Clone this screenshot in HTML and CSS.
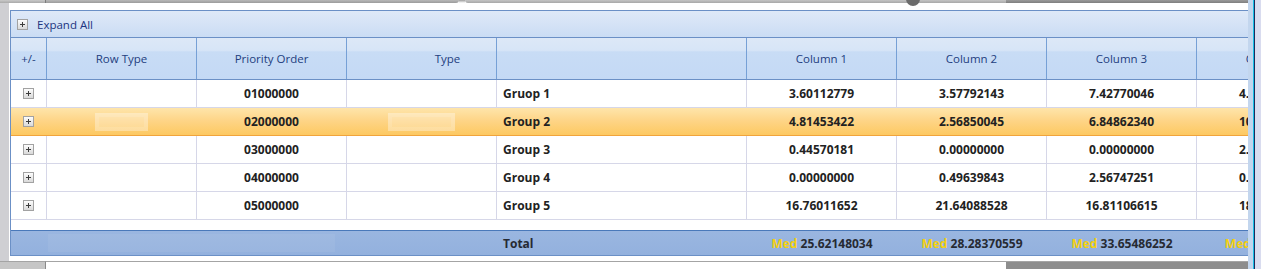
FILE: index.html
```html
<!DOCTYPE html>
<html lang="en">
<head>
    <meta charset="UTF-8">
    <title>Group Totals</title>
    <link rel="stylesheet" href="styles.css">
</head>
<body>

    <div class="screen">
        <div class="workspace">
            <!-- Tab strip of the host window -->
            <div class="tabstrip">
                <span class="tab tab-a"></span>
                <span class="tab tab-b"></span>
                <span class="notch"></span>
                <span class="tab tab-c"><span class="close-btn"></span></span>
                <span class="tab tab-d"></span>
            </div>

            <div class="middle">
                <div class="side"></div>
                <div class="panel">
                    <div class="grid">
                        <div class="toolbar">
                            <span class="plus"></span>
                            <span>Expand All</span>
                        </div>

                        <div class="row head">
                            <div class="cell">+/-</div>
                            <div class="cell">Row Type</div>
                            <div class="cell">Priority Order</div>
                            <div class="cell type-head">Type</div>
                            <div class="cell"></div>
                            <div class="cell">Column 1</div>
                            <div class="cell">Column 2</div>
                            <div class="cell">Column 3</div>
                            <div class="cell">Column 4</div>
                        </div>

                        <div class="row data">
                            <div class="cell"><span class="plus"></span></div>
                            <div class="cell"></div>
                            <div class="cell">01000000</div>
                            <div class="cell"></div>
                            <div class="cell group">Gruop 1</div>
                            <div class="cell">3.60112779</div>
                            <div class="cell">3.57792143</div>
                            <div class="cell">7.42770046</div>
                            <div class="cell">4.35218870</div>
                        </div>

                        <div class="row data selected">
                            <div class="cell"><span class="plus"></span></div>
                            <div class="cell"><span class="smear"></span></div>
                            <div class="cell">02000000</div>
                            <div class="cell"><span class="smear wide"></span></div>
                            <div class="cell group">Group 2</div>
                            <div class="cell">4.81453422</div>
                            <div class="cell">2.56850045</div>
                            <div class="cell">6.84862340</div>
                            <div class="cell">10.2648177</div>
                        </div>

                        <div class="row data">
                            <div class="cell"><span class="plus"></span></div>
                            <div class="cell"></div>
                            <div class="cell">03000000</div>
                            <div class="cell"></div>
                            <div class="cell group">Group 3</div>
                            <div class="cell">0.44570181</div>
                            <div class="cell">0.00000000</div>
                            <div class="cell">0.00000000</div>
                            <div class="cell">2.10843362</div>
                        </div>

                        <div class="row data">
                            <div class="cell"><span class="plus"></span></div>
                            <div class="cell"></div>
                            <div class="cell">04000000</div>
                            <div class="cell"></div>
                            <div class="cell group">Group 4</div>
                            <div class="cell">0.00000000</div>
                            <div class="cell">0.49639843</div>
                            <div class="cell">2.56747251</div>
                            <div class="cell">0.73920514</div>
                        </div>

                        <div class="row data">
                            <div class="cell"><span class="plus"></span></div>
                            <div class="cell"></div>
                            <div class="cell">05000000</div>
                            <div class="cell"></div>
                            <div class="cell group">Group 5</div>
                            <div class="cell">16.76011652</div>
                            <div class="cell">21.64088528</div>
                            <div class="cell">16.81106615</div>
                            <div class="cell">18.5034671</div>
                        </div>

                        <div class="spacer"></div>

                        <!-- Summary row -->
                        <div class="row footer">
                            <div class="cell span4"><span class="smear-blue"></span></div>
                            <div class="cell group">Total</div>
                            <div class="cell"><span class="med">Med</span>&nbsp;25.62148034</div>
                            <div class="cell"><span class="med">Med</span>&nbsp;28.28370559</div>
                            <div class="cell"><span class="med">Med</span>&nbsp;33.65486252</div>
                            <div class="cell"><span class="med">Med</span>&nbsp;36.0000000</div>
                        </div>
                    </div>
                </div>
            </div>

            <div class="bottomstrip">
                <span class="bs bs-a"></span>
                <span class="bs bs-b"></span>
                <span class="bs bs-c"></span>
            </div>
        </div>

        <!-- Scroll edge of the window -->
        <div class="edge">
            <span class="edge-blue"></span>
            <span class="edge-cyan"></span>
            <span class="edge-dark"></span>
            <span class="edge-lav"></span>
        </div>
    </div>

</body>
</html>
```

FILE: styles.css
```css
body {
    margin: 0;
    padding: 0;
    background-color: #fff;
    font-family: 'Open Sans', sans-serif;
    overflow: hidden;
}

.screen {
    display: flex;
    width: 1261px;
    height: 269px;
}

.workspace {
    width: 1248px;
    display: flex;
    flex-direction: column;
    overflow: hidden;
}

/* Tab strip */
.tabstrip {
    height: 3px;
    display: flex;
    position: relative;
}

.tab {
    height: 3px;
}

.tab-a {
    width: 45px;
    background: linear-gradient(#c9c9c9, #a9a9a9);
    border-right: 1px solid #7c7c7c;
}

.tab-b {
    width: 413px;
    background: linear-gradient(#b8b8b8, #9c9c9c);
    border-bottom-right-radius: 3px;
}

.notch {
    width: 6px;
    background: linear-gradient(#9c9c9c, #fff);
}

.tab-c {
    width: 541px;
    background: linear-gradient(#c4c4c4, #a8a8a8);
    border-bottom-left-radius: 3px;
    position: relative;
}

.tab-d {
    flex: 1;
    background: linear-gradient(#9a9a9a, #7f7f7f);
}

.close-btn {
    position: absolute;
    left: 441px;
    top: -8px;
    width: 14px;
    height: 14px;
    border-radius: 50%;
    background-color: #6b6b6b;
}

.middle {
    height: 258px;
    display: flex;
}

.side {
    width: 9px;
    background-color: #cfcfd3;
}

.panel {
    flex: 1;
    padding-top: 7px;
    padding-left: 1px;
    overflow: hidden;
}

/* Grid */
.grid {
    height: 244px;
    border: 1px solid #6b90c6;
    border-right: none;
    overflow: hidden;
    display: flex;
    flex-direction: column;
}

.toolbar {
    height: 26px;
    flex-shrink: 0;
    display: flex;
    align-items: center;
    gap: 9px;
    padding-left: 6px;
    font-size: 11.5px;
    color: #1c3581;
    background: linear-gradient(#dfe9f8, #d5e3f6 50%, #cadcf4);
    border-bottom: 1px solid #6b90c6;
}

.plus {
    width: 9px;
    height: 9px;
    border: 1px solid #a2a2a2;
    background: linear-gradient(#fdfdfd, #d9d9d9);
    position: relative;
    flex-shrink: 0;
}

.plus::before,
.plus::after {
    content: "";
    position: absolute;
    background-color: #3c3c3c;
}

.plus::before {
    left: 2px;
    top: 4px;
    width: 5px;
    height: 1px;
}

.plus::after {
    left: 4px;
    top: 2px;
    width: 1px;
    height: 5px;
}

.row {
    display: grid;
    grid-template-columns: 36px 150px 150px 150px 250px 150px 150px 150px 150px;
    flex-shrink: 0;
}

.cell {
    display: flex;
    align-items: center;
    justify-content: center;
    white-space: nowrap;
    overflow: hidden;
}

.head {
    height: 41px;
    font-size: 11.5px;
    color: #233e80;
    background: linear-gradient(#dde8f7, #d7e5f7 30%, #c8dcf5 34%, #c4d9f5);
    border-bottom: 1px solid #6b90c6;
}

.head .cell {
    border-right: 1px solid #76a0d6;
}

.head .type-head {
    padding-left: 52px;
}

.data {
    height: 27px;
    font-size: 12px;
    font-weight: 700;
    color: #222;
    border-bottom: 1px solid #d6d7e8;
}

.data .cell {
    border-right: 1px solid #d6d7e8;
}

.cell.group {
    justify-content: flex-start;
    padding-left: 6px;
}

.selected {
    background: linear-gradient(#fee5ab, #fed588 45%, #fdc962);
    border-bottom-color: #f1a43c;
}

.selected .cell {
    border-right-color: transparent;
}

.smear {
    width: 53px;
    height: 18px;
    background-color: rgba(255, 255, 255, 0.25);
    box-shadow: inset 0 0 0 4px rgba(255, 255, 255, 0.12);
}

.smear.wide {
    width: 67px;
}

.spacer {
    height: 10px;
    flex-shrink: 0;
}

.footer {
    height: 24px;
    font-size: 12px;
    font-weight: 700;
    color: #262a33;
    background: linear-gradient(#9ab6e0, #93b1de);
    border-top: 1px solid #4a79ba;
}

.footer .span4 {
    grid-column: span 4;
    justify-content: flex-start;
    padding-left: 37px;
}

.smear-blue {
    width: 287px;
    height: 18px;
    background-color: rgba(255, 255, 255, 0.06);
}

.med {
    color: #f4d00e;
}

/* Strip below the grid */
.bottomstrip {
    height: 8px;
    display: flex;
}

.bs {
    height: 7px;
    border-top: 1px solid #a4a4a4;
}

.bs-a {
    width: 45px;
    background-color: #c6c6c6;
    border-right: 1px solid #8a8a8a;
}

.bs-b {
    width: 960px;
    background-color: #fff;
}

.bs-c {
    flex: 1;
    background-color: #8d8d8d;
}

/* Window edge on the right */
.edge {
    width: 13px;
    display: flex;
}

.edge-blue {
    width: 5px;
    background-color: #c3d6ee;
}

.edge-cyan {
    width: 1px;
    background-color: #18bfe6;
}

.edge-dark {
    width: 1px;
    background-color: #1d2b5c;
}

.edge-lav {
    flex: 1;
    background-color: #d9dcef;
}
```
